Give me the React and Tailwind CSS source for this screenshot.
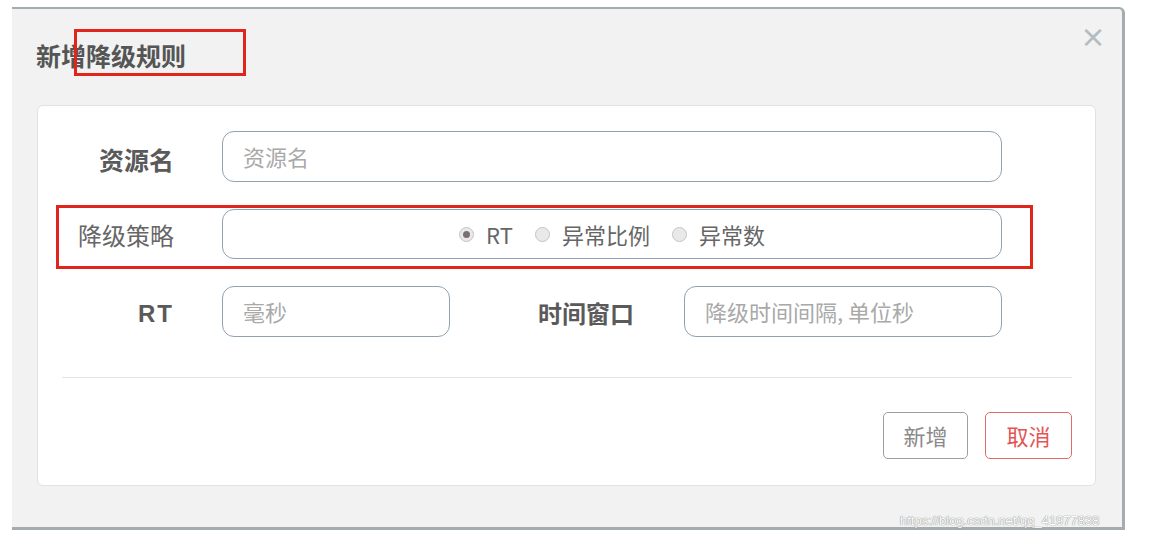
import React from 'react'

const CJK = '"Noto Sans CJK SC", "Liberation Sans", sans-serif'

function Field({ placeholder, className = '' }) {
  return (
    <div
      className={`h-[51px] rounded-[12px] border-[1.5px] border-[#8fa3b3] bg-white flex items-center pl-[20px] text-[22px] text-[#a9a9a9] ${className}`}
    >
      {placeholder}
    </div>
  )
}

function Radio({ checked, label }) {
  return (
    <label className="flex items-center gap-[12px]">
      <span className="w-[15px] h-[15px] rounded-full border border-[#c4c4c4] bg-[#e9e9e9] grid place-items-center">
        {checked && <span className="w-[7px] h-[7px] rounded-full bg-[#7a6f72]" />}
      </span>
      <span>{label}</span>
    </label>
  )
}

export default function App() {
  return (
    <div className="w-[1152px] h-[540px] bg-white relative overflow-hidden" style={{ fontFamily: CJK }}>
      {/* dialog */}
      <div className="absolute left-[12px] top-[7px] w-[1113px] h-[523px] bg-[#f2f2f2] border-t-2 border-r-[3px] border-b-[3px] border-[#a4acaf] rounded-tr-[6px] flex flex-col">
        <div className="h-[96px] flex items-start justify-between pl-[24px] pr-[16px]">
          <h1 className="mt-[28px] text-[25px] font-bold text-[#555]">新增降级规则</h1>
          <span className="mt-[14px] text-[26px] leading-none font-bold text-[#b3bcc0]">×</span>
        </div>

        {/* body card */}
        <div className="ml-[25px] mr-[26px] h-[381px] bg-white rounded-[6px] border border-[#e2e2e2] flex flex-col pl-[24px] pr-[23px]">
          <div className="flex flex-col gap-[27px] pt-[25px]">
            <div className="flex items-center">
              <span className="w-[112px] pt-[6px] text-right text-[25px] font-bold text-[#5a5a5a]">资源名</span>
              <Field placeholder="资源名" className="ml-[48px] w-[780px]" />
            </div>

            <div className="flex items-center">
              <span className="w-[112px] pt-[2px] text-right text-[24px] text-[#666]">降级策略</span>
              <div className="ml-[48px] w-[780px] h-[50px] rounded-[12px] border-[1.5px] border-[#8fa3b3] flex items-center justify-center gap-[22px] text-[22px] text-[#666]">
                <Radio checked label="RT" />
                <Radio label="异常比例" />
                <Radio label="异常数" />
              </div>
            </div>

            <div className="flex items-center">
              <span
                className="w-[112px] pt-[4px] text-right text-[24px] font-bold text-[#5a5a5a] tracking-[2px]"
                style={{ fontFamily: '"Liberation Sans", sans-serif' }}
              >
                RT
              </span>
              <Field placeholder="毫秒" className="ml-[48px] w-[228px]" />
              <span className="w-[184px] pt-[2px] text-right text-[24px] font-bold text-[#5a5a5a]">时间窗口</span>
              <Field placeholder="降级时间间隔, 单位秒" className="ml-[50px] w-[318px]" />
            </div>
          </div>

          <div className="mt-[40px] border-t border-[#e4e4e4]" />

          <div className="flex justify-end gap-[17px] mt-[34px]">
            <button className="w-[85px] h-[47px] rounded-[5px] border border-[#9aa0a3] bg-white text-[22px] text-[#8a8a8a]">
              新增
            </button>
            <button className="w-[87px] h-[47px] rounded-[5px] border border-[#e46a6a] bg-white text-[22px] text-[#e35555]">
              取消
            </button>
          </div>
        </div>
      </div>

      {/* annotation boxes */}
      <div className="absolute left-[74px] top-[29px] w-[172px] h-[47px] border-[3px] border-[#e0251b]" />
      <div className="absolute left-[56px] top-[205px] w-[977px] h-[64px] border-[3px] border-[#e0251b]" />

      {/* watermark */}
      <span
        className="absolute left-[900px] top-[511px] text-[13px] text-white"
        style={{ fontFamily: '"Liberation Sans", sans-serif', textShadow: '0 0 1px #888, 0 0 1px #888' }}
      >
        https://blog.csdn.net/qq_41977838
      </span>
    </div>
  )
}
